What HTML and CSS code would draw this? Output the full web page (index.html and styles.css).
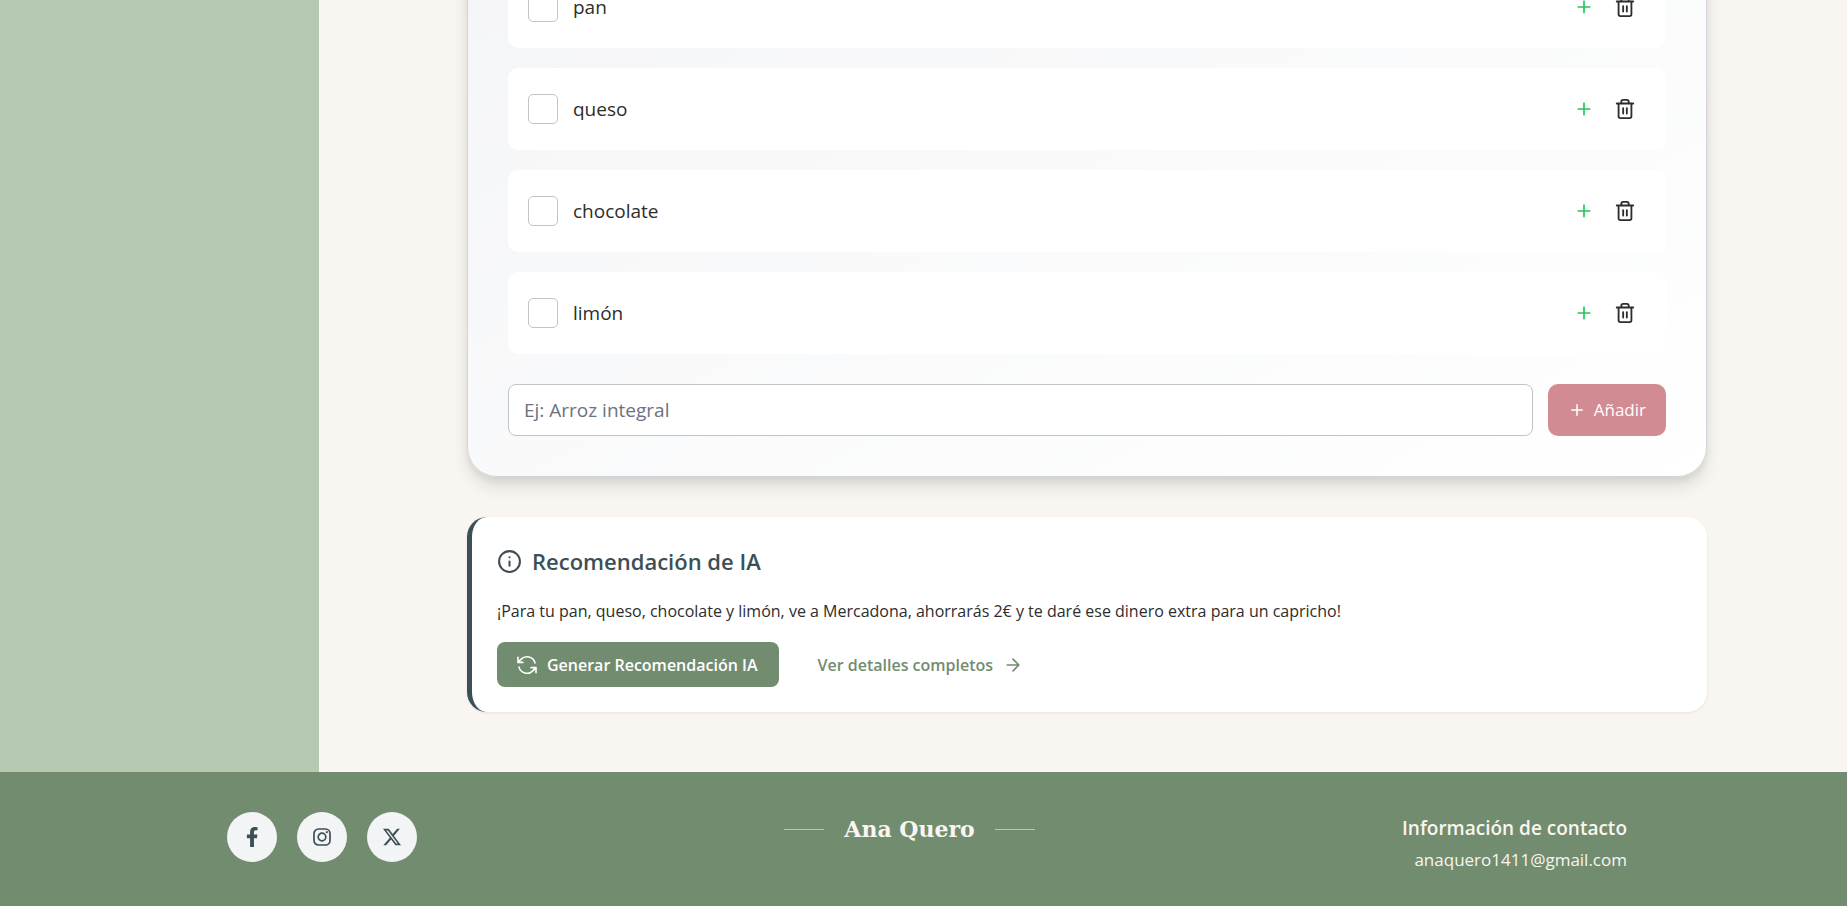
FILE: index.html
```html
<!DOCTYPE html>
<html lang="es">
<head>
<meta charset="utf-8">
<title>Lista de la compra</title>
<link rel="stylesheet" href="styles.css">
</head>
<body>
<svg class="sprite" aria-hidden="true">
  <symbol id="plus" viewBox="0 0 24 24"><path d="M5 12h14M12 5v14"/></symbol>
  <symbol id="trash" viewBox="0 0 24 24"><path d="M3 6h18M19 6v14c0 1-1 2-2 2H7c-1 0-2-1-2-2V6M8 6V4c0-1 1-2 2-2h4c1 0 2 1 2 2v2M10 11v6M14 11v6"/></symbol>
</svg>
<div class="shell">
  <aside class="sidebar"></aside>
  <main class="main">
    <section class="list-card">
      <ul class="items">
        <li class="item">
          <input class="check" type="checkbox" id="pan"><label class="name" for="pan">pan</label>
          <button class="icon-btn add" aria-label="Añadir pan"><svg class="icon"><use href="#plus"/></svg></button>
          <button class="icon-btn" aria-label="Eliminar pan"><svg class="icon large"><use href="#trash"/></svg></button>
        </li>
        <li class="item">
          <input class="check" type="checkbox" id="queso"><label class="name" for="queso">queso</label>
          <button class="icon-btn add" aria-label="Añadir queso"><svg class="icon"><use href="#plus"/></svg></button>
          <button class="icon-btn" aria-label="Eliminar queso"><svg class="icon large"><use href="#trash"/></svg></button>
        </li>
        <li class="item">
          <input class="check" type="checkbox" id="chocolate"><label class="name" for="chocolate">chocolate</label>
          <button class="icon-btn add" aria-label="Añadir chocolate"><svg class="icon"><use href="#plus"/></svg></button>
          <button class="icon-btn" aria-label="Eliminar chocolate"><svg class="icon large"><use href="#trash"/></svg></button>
        </li>
        <li class="item">
          <input class="check" type="checkbox" id="limon"><label class="name" for="limon">limón</label>
          <button class="icon-btn add" aria-label="Añadir limón"><svg class="icon"><use href="#plus"/></svg></button>
          <button class="icon-btn" aria-label="Eliminar limón"><svg class="icon large"><use href="#trash"/></svg></button>
        </li>
      </ul>
      <form class="add-form">
        <input class="field" type="text" placeholder="Ej: Arroz integral" aria-label="Nuevo producto">
        <button class="add-btn" type="button"><svg class="icon small"><use href="#plus"/></svg>Añadir</button>
      </form>
    </section>
    <section class="ai-card">
      <h2 class="ai-title">
        <svg class="icon info" viewBox="0 0 24 24"><circle cx="12" cy="12" r="10"/><path d="M12 16v-4M12 8h.01"/></svg>
        Recomendación de IA
      </h2>
      <p class="ai-text">¡Para tu pan, queso, chocolate y limón, ve a Mercadona, ahorrarás 2€ y te daré ese dinero extra para un capricho!</p>
      <div class="ai-actions">
        <button class="generate" type="button">
          <svg class="icon refresh" viewBox="0 0 24 24"><path transform="matrix(-1 0 0 1 24 0)" d="M16.02 9.35h5M2.98 19.64v-5h5M2.98 14.65l3.18 3.18a8.25 8.25 0 0 0 13.8-3.7M4.03 9.87a8.25 8.25 0 0 1 13.8-3.7l3.19 3.18M21.02 4.36v4.99"/></svg>
          Generar Recomendación IA
        </button>
        <a class="details" href="#detalles">Ver detalles completos
          <svg class="icon" viewBox="0 0 24 24"><path d="M5 12h14M12 5l7 7-7 7"/></svg>
        </a>
      </div>
    </section>
  </main>
</div>
<footer class="footer">
  <nav class="social" aria-label="Redes sociales">
    <a class="bubble" href="#facebook" aria-label="Facebook"><svg class="logo" viewBox="0 0 320 512"><path d="M279 288l14-93h-89v-60c0-25 12-50 52-50h41V7s-37-7-72-7c-73 0-121 44-121 125v70H23v93h81v224h100V288z"/></svg></a>
    <a class="bubble" href="#instagram" aria-label="Instagram"><svg class="logo line" viewBox="0 0 20 20"><rect x="2" y="2" width="16" height="16" rx="4.5"/><circle cx="10" cy="10" r="3.8"/><circle class="dot" cx="14.8" cy="5.2" r="1.1"/></svg></a>
    <a class="bubble" href="#x" aria-label="X"><svg class="logo x" viewBox="0 0 16 16"><path d="M12.6.75h2.454l-5.36 6.142L16 15.25h-4.937l-3.867-5.07-4.425 5.07H.316l5.733-6.57L0 .75h5.063l3.495 4.633L12.601.75Zm-.86 13.028h1.36L4.323 2.145H2.865z"/></svg></a>
  </nav>
  <div class="brand">Ana Quero</div>
  <address class="contact">
    <strong class="contact-title">Información de contacto</strong>
    <a class="mail" href="mailto:anaquero1411@gmail.com">anaquero1411@gmail.com</a>
  </address>
</footer>
</body>
</html>
```

FILE: styles.css
```css
* { box-sizing: border-box; }
body {
  margin: 0;
  height: 100vh;
  display: flex;
  flex-direction: column;
  overflow: hidden;
  background: #f9f5f0;
  color: #2d2d2d;
  font: 19px/32px "Segoe UI", "Open Sans", sans-serif;
}
button, input { font: inherit; color: inherit; }
button { border: 0; background: none; padding: 0; cursor: pointer; }
a { color: inherit; text-decoration: none; }
.sprite { display: none; }
.icon {
  width: 20px;
  height: 20px;
  flex: none;
  fill: none;
  stroke: currentColor;
  stroke-width: 2;
  stroke-linecap: round;
  stroke-linejoin: round;
}
.icon.small { width: 18px; height: 18px; }
.icon.large { width: 22px; height: 22px; }
.icon.info { width: 25px; height: 25px; }
.icon.refresh { width: 24px; height: 24px; stroke-width: 1.6; }

.shell { flex: 1; min-height: 0; display: flex; overflow: hidden; }
.sidebar { width: 319px; flex: none; background: #b5c9b3; }
.main {
  flex: 1;
  display: flex;
  flex-direction: column;
  justify-content: flex-end;
  gap: 40px;
  padding: 0 140px 60px 148px;
}

.list-card {
  flex: none;
  min-height: 680px;
  display: flex;
  flex-direction: column;
  justify-content: flex-end;
  gap: 30px;
  padding: 40px;
  border: 1px solid #d1d5db;
  border-radius: 30px;
  background: linear-gradient(to bottom right, #f3f4f6, #fff);
  box-shadow: 0 10px 16px rgba(0, 0, 0, .1), 0 4px 6px rgba(0, 0, 0, .06);
}
.items { list-style: none; margin: 0; padding: 0; display: grid; gap: 20px; }
.item {
  display: flex;
  align-items: center;
  height: 82px;
  padding: 0 30px 0 20px;
  border-radius: 10px;
  background: #fff;
}
.check {
  appearance: none;
  width: 30px;
  height: 30px;
  margin: 0 15px 0 0;
  border: 1px solid #c4c4c4;
  border-radius: 5px;
  background: #fff;
}
.name { flex: 1; }
.icon-btn { display: flex; }
.add { color: #22c55e; margin-right: 20px; }
.add-form { display: flex; gap: 15px; }
.field {
  flex: 1;
  min-width: 0;
  height: 52px;
  padding: 0 15px;
  border: 1px solid #c4c4c4;
  border-radius: 8px;
  background: #fff;
}
.field::placeholder { color: #6b7280; }
.add-btn {
  display: flex;
  align-items: center;
  gap: 8px;
  padding: 0 20px;
  border-radius: 10px;
  background: #d28a93;
  color: #fff;
  font-size: 17px;
}

.ai-card {
  flex: none;
  padding: 25px;
  border-left: 5px solid #3d4f56;
  border-radius: 20px;
  background: #fff;
  box-shadow: 0 1px 3px rgba(0, 0, 0, .08);
}
.ai-title {
  display: flex;
  align-items: center;
  gap: 10px;
  margin: 0 0 15px;
  color: #3d4f56;
  font-size: 22px;
  line-height: 38px;
  font-weight: 600;
}
.ai-text { margin: 0 0 15px; font-size: 16px; }
.ai-actions { display: flex; align-items: center; gap: 38px; font-size: 16px; font-weight: 600; }
.generate {
  display: flex;
  align-items: center;
  gap: 8px;
  height: 45px;
  padding: 0 22px 0 18px;
  border-radius: 8px;
  background: #728c6f;
  color: #fff;
}
.details { display: flex; align-items: center; gap: 10px; color: #728c6f; }

.footer {
  display: flex;
  justify-content: space-between;
  padding: 40px 220px 30px 227px;
  background: #728c6f;
  color: #f9f5f0;
}
.social { display: flex; gap: 20px; }
.bubble {
  display: grid;
  place-items: center;
  width: 50px;
  height: 50px;
  border-radius: 50%;
  background: #f3f4f6;
  color: #3d4f56;
}
.logo { height: 20px; fill: currentColor; }
.logo.x { height: 18px; }
.logo.line { fill: none; stroke: currentColor; stroke-width: 1.7; }
.logo .dot { fill: currentColor; stroke: none; }
.brand {
  display: flex;
  align-items: center;
  gap: 20px;
  height: 35px;
  font: bold 22px/35px Georgia, "DejaVu Serif", serif;
}
.brand::before, .brand::after { content: ""; width: 40px; height: 1px; background: #b5c9b3; }
.contact { display: grid; align-content: start; text-align: right; font-style: normal; }
.contact-title { font-weight: 600; }
.mail { font-size: 17px; }
```
